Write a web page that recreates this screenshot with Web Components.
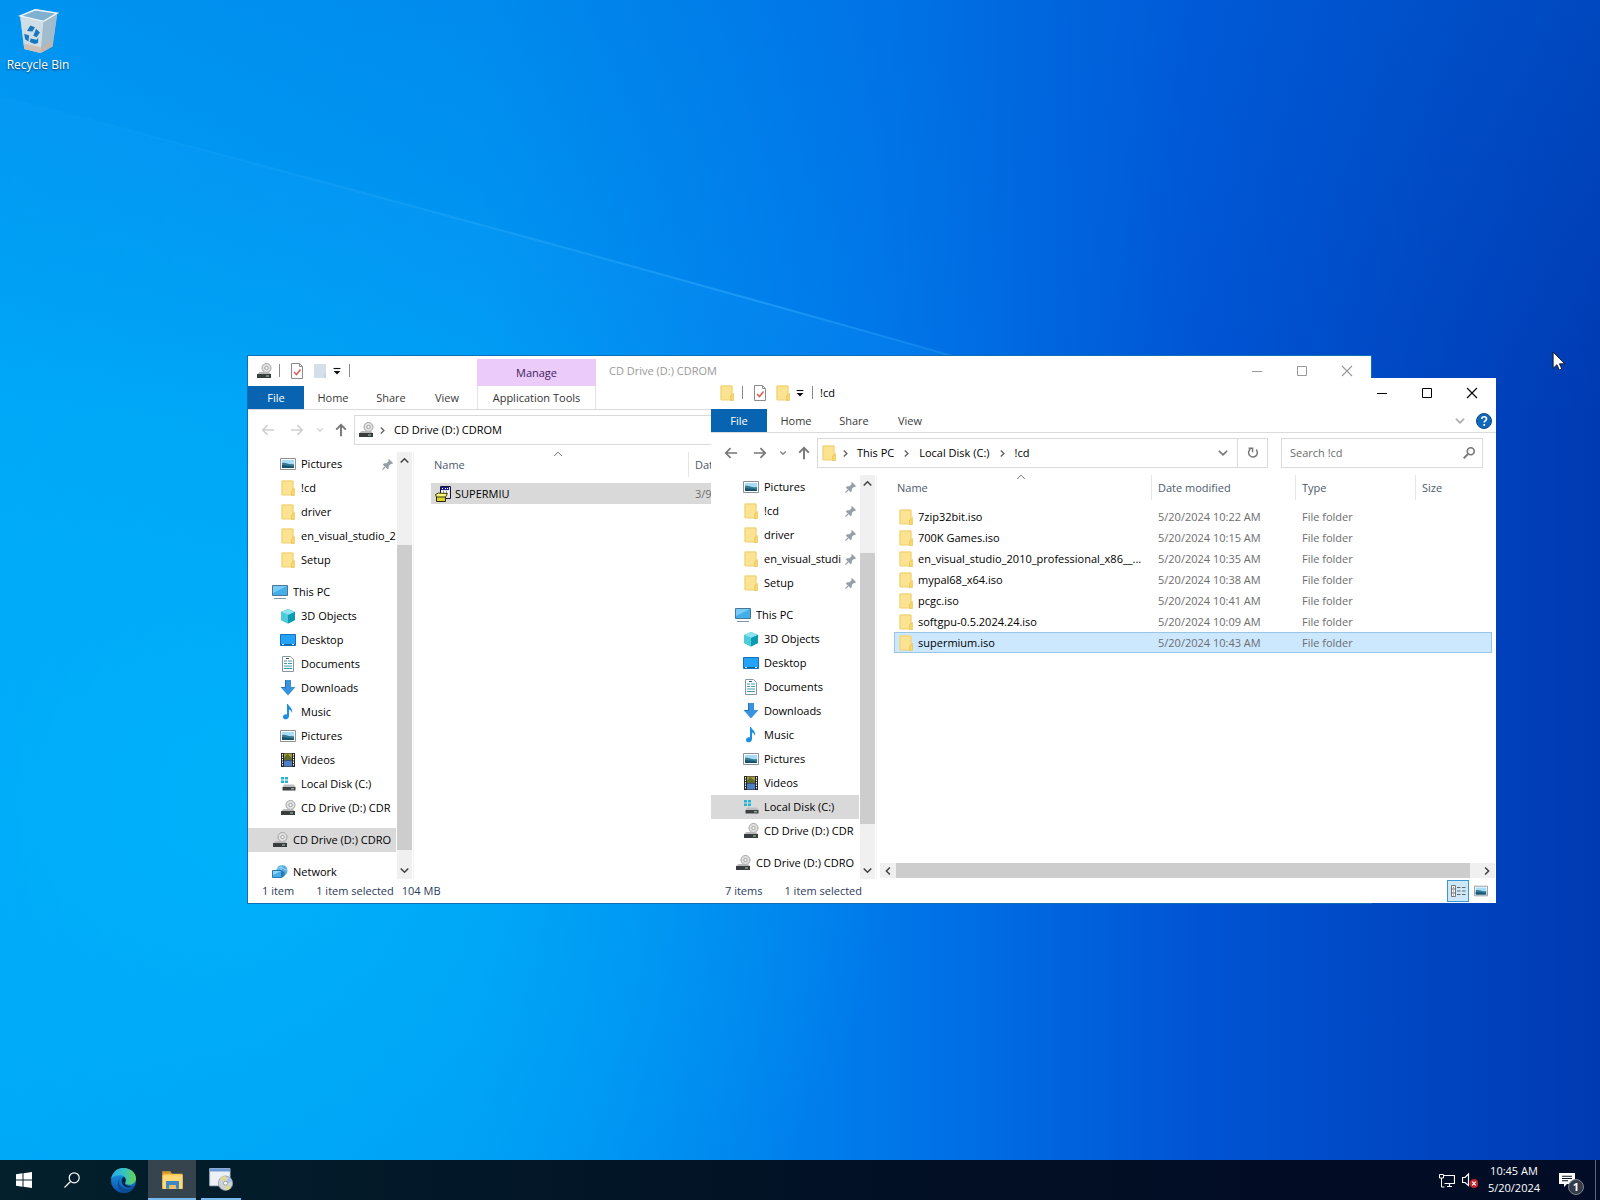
<!DOCTYPE html>
<html lang="en">
<head>
<meta charset="utf-8">
<title>Desktop</title>
<style>
html,body{margin:0;height:100%;overflow:hidden}
body{font:11px/16px "Open Sans","Noto Sans",sans-serif;color:#000}
</style>
</head>
<body>
<desk-top>
  <desk-icon slot="icons" label="Recycle Bin"></desk-icon>

  <explorer-window slot="windows" class="back" inactive heading="CD Drive (D:) CDROM" icon="cd" second="blank" context="Manage" context-tab="Application Tools" path="CD Drive (D:) CDROM" search="Search CD Drive (D:) CDROM" style="--before:76;--thumb:305;--after:12">
    <nav-item slot="nav" icon="pictures" pinned>Pictures</nav-item>
    <nav-item slot="nav" icon="folder">!cd</nav-item>
    <nav-item slot="nav" icon="folder">driver</nav-item>
    <nav-item slot="nav" icon="folder">en_visual_studio_2</nav-item>
    <nav-item slot="nav" icon="folder">Setup</nav-item>
    <nav-item slot="nav" icon="pc" root>This PC</nav-item>
    <nav-item slot="nav" icon="cube">3D Objects</nav-item>
    <nav-item slot="nav" icon="desktop">Desktop</nav-item>
    <nav-item slot="nav" icon="documents">Documents</nav-item>
    <nav-item slot="nav" icon="downloads">Downloads</nav-item>
    <nav-item slot="nav" icon="music">Music</nav-item>
    <nav-item slot="nav" icon="pictures">Pictures</nav-item>
    <nav-item slot="nav" icon="videos">Videos</nav-item>
    <nav-item slot="nav" icon="disk">Local Disk (C:)</nav-item>
    <nav-item slot="nav" icon="cd">CD Drive (D:) CDR</nav-item>
    <nav-item slot="nav" icon="cd" root selected>CD Drive (D:) CDRO</nav-item>
    <nav-item slot="nav" icon="network" root>Network</nav-item>
    <file-table slot="files" columns="Name|Date modified" rows="installer,SUPERMIU,3/9/2024" selected="0" inactive></file-table>
    <span slot="status">1 item</span>
    <span slot="status">1 item selected</span>
    <span slot="extra">104 MB</span>
  </explorer-window>

  <explorer-window slot="windows" class="front" heading="!cd" icon="folder" second="folder" path="This PC|Local Disk (C:)|!cd" search="Search !cd" hscroll style="--before:61;--thumb:271;--after:38">
    <nav-item slot="nav" icon="pictures" pinned>Pictures</nav-item>
    <nav-item slot="nav" icon="folder" pinned>!cd</nav-item>
    <nav-item slot="nav" icon="folder" pinned>driver</nav-item>
    <nav-item slot="nav" icon="folder" pinned>en_visual_studi</nav-item>
    <nav-item slot="nav" icon="folder" pinned>Setup</nav-item>
    <nav-item slot="nav" icon="pc" root>This PC</nav-item>
    <nav-item slot="nav" icon="cube">3D Objects</nav-item>
    <nav-item slot="nav" icon="desktop">Desktop</nav-item>
    <nav-item slot="nav" icon="documents">Documents</nav-item>
    <nav-item slot="nav" icon="downloads">Downloads</nav-item>
    <nav-item slot="nav" icon="music">Music</nav-item>
    <nav-item slot="nav" icon="pictures">Pictures</nav-item>
    <nav-item slot="nav" icon="videos">Videos</nav-item>
    <nav-item slot="nav" icon="disk" selected>Local Disk (C:)</nav-item>
    <nav-item slot="nav" icon="cd">CD Drive (D:) CDR</nav-item>
    <nav-item slot="nav" icon="cd" root>CD Drive (D:) CDRO</nav-item>
    <file-table slot="files" columns="Name|Date modified|Type|Size" selected="6"
      rows="folder,7zip32bit.iso,5/20/2024 10:22 AM,File folder|folder,700K Games.iso,5/20/2024 10:15 AM,File folder|folder,en_visual_studio_2010_professional_x86__...,5/20/2024 10:35 AM,File folder|folder,mypal68_x64.iso,5/20/2024 10:38 AM,File folder|folder,pcgc.iso,5/20/2024 10:41 AM,File folder|folder,softgpu-0.5.2024.24.iso,5/20/2024 10:09 AM,File folder|folder,supermium.iso,5/20/2024 10:43 AM,File folder"></file-table>
    <span slot="status">7 items</span>
    <span slot="status">1 item selected</span>
  </explorer-window>

  <task-bar slot="taskbar"></task-bar>
</desk-top>

<script>
const ICONS = {
folder:'<path d="M1.500 .5h12v14.500h-12z" fill="#fbe391"/><path d="M2 1h11v14H2z" fill="none" stroke="#efd070"/><path d="M11.500 15.500V11l3-2.500v7z" fill="#f8d766" stroke="#e5bf52" stroke-width=".6"/>',
blank:'<path d="M2 1h12v14H2z" fill="#d5dfea"/><path d="M12 15v-4l2-2v6z" fill="#c8d4e1"/>',
check:'<path d="M2.500 .5h8l3 3v12h-11z" fill="#fff" stroke="#8c8c8c"/><path d="M10.500.5v3h3" fill="none" stroke="#8c8c8c"/><path d="M5 9l2.500 2.500 4-5" fill="none" stroke="#e0605a" stroke-width="1.600"/>',
cd:'<circle cx="10.500" cy="5" r="4.500" fill="#e4e4e4" stroke="#a2a2a2"/><circle cx="10.500" cy="5" r="1.700" fill="#fff" stroke="#9a9a9a"/><path d="M3.500 9h9.500l2 2.500H1z" fill="#b9b9b9"/><path d="M1 11h14v4H1z" fill="#3a3d40"/><path d="M10 13h3" stroke="#a9d5a0"/>',
disk:'<path d="M1 1h3v2.500H1zM5 1h3v2.500H5zM1 4.500h3V7H1zM5 4.500h3V7H5z" fill="#23b4d8"/><path d="M4 8.500h10l1.500 2.500H2.500z" fill="#bcbfc2"/><path d="M2.500 11h13v3.500h-13z" fill="#3c4043"/><path d="M11 12.800h3" stroke="#b5dcb0"/>',
pictures:'<path d="M.5 2.500h15v11H.5z" fill="#fff" stroke="#8b9299"/><path d="M2 4h12v8H2z" fill="#a7dcf7"/><path d="M2 7c4-1 6 2 12 1v4H2z" fill="#347b92"/><path d="M2 9c5 1 8 0 12 2v1H2z" fill="#1a5270"/>',
pc:'<path d="M.5 1.500h15v10H.5z" fill="#44aeea" stroke="#4a7894"/><path d="M1 2h14L1 9z" fill="#76ccf5"/><path d="M2 14.500h12" stroke="#7d98a8"/>',
cube:'<path d="M1 4l7-3 7 3v8l-7 3.500L1 12z" fill="#13b4c8"/><path d="M1 4l7-3 7 3-7 3z" fill="#8ee3ee"/><path d="M1 4l7 3v8.500L1 12z" fill="#4ecbd9"/><path d="M8 7l7-3v8l-7 3.500z" fill="#0b9cb4"/>',
desktop:'<path d="M.5 2.500h15v11H.5z" fill="#22a2f8" stroke="#1272bd"/><path d="M1 12.500h14" stroke="#0d62aa"/><path d="M2 12.500h2m8 0h2" stroke="#d4ecff"/>',
documents:'<path d="M2.500.5h8l3 3v12h-11z" fill="#fff" stroke="#8797a0"/><path d="M4 5h3M8 5h4M4 7.500h3M8 7.500h4M4 10h8M4 12.500h8" stroke="#409bb3"/><path d="M6 2.500h3" stroke="#345968"/>',
downloads:'<path d="M5 0h6v7h4.500L8 15.500.5 7H5z" fill="#3793dd"/><path d="M5.500 0v7.500H1.500" fill="none" stroke="#236fb8"/>',
music:'<path d="M8 0c1 3 5 4 4 9-.5-2-1.500-3-3-3.500V12c0 4-6 4.500-6 1 0-2 2-3 4-2.500V0z" fill="#1d8fe0"/>',
videos:'<path d="M1 1h14v14H1z" fill="#252629"/><path d="M4 1.500h8v6H4z" fill="#a89a3b"/><path d="M4 8.500h8v6H4z" fill="#4c7ec5"/><path d="M4 6l3-4 5 4v1.500H4z" fill="#5a6d2b"/><path d="M2.500 2v12M13.500 2v12" stroke="#fff" stroke-dasharray="1.500 1"/>',
network:'<circle cx="10" cy="6.500" r="5.500" fill="#55ade1"/><path d="M5 5c5-4 7 1 10 1M10 1c-3 4 1 7 1 11" fill="none" stroke="#a3ddf6"/><path d="M.5 6.500h9v7h-9z" fill="#48ace9" stroke="#2a79b1"/><path d="M1 7h8l-8 4z" fill="#8ed5fb"/><path d="M9.500 14l3-2V8l-3-1.500z" fill="#2d7cae"/>',
installer:'<path d="M5.500.5h10v12h-10z" fill="#e4e4ea" stroke="#171738"/><path d="M6 1h8v3H6z" fill="#1c208b"/><path d="M6 5h8v4H6z" fill="#fff"/><path d="M7 2.500h1m2 0h1m1 0h1" stroke="#fff"/><path d="M8 6h1m2 0h1" stroke="#222"/><path d="M1.500 10.500h9v5h-9z" fill="#d9d232" stroke="#292900"/><path d="M.5 8.500l3-1.500 9 .5-2 3.500h-9z" fill="#f8f37e" stroke="#3b3700"/>',
pin:'<path d="M9 1l6 6-2 1-1-.5-3 3v3L7.500 15 1 8.500 3 7h3l3-3-.5-1z" fill="#979ea7"/><path d="M4 12l-3.500 3.500" stroke="#979ea7" stroke-width="1.500"/>',
back:'<path d="M15 8H2M7.500 2.500L2 8l5.500 5.500" fill="none" stroke="currentColor" stroke-width="1.900"/>',
forward:'<path d="M1 8h13M8.500 2.500L14 8l-5.500 5.500" fill="none" stroke="currentColor" stroke-width="1.900"/>',
up:'<path d="M8 15V2M2.500 7.500L8 2l5.500 5.500" fill="none" stroke="currentColor" stroke-width="2.200"/>',
down:'<path d="M2.500 5L8 10.500 13.500 5" fill="none" stroke="currentColor" stroke-width="2.300"/>',
upper:'<path d="M2.500 11L8 5.500 13.500 11" fill="none" stroke="currentColor" stroke-width="2.300"/>',
left:'<path d="M11 2.500L5.500 8 11 13.500" fill="none" stroke="currentColor" stroke-width="2.500"/>',
right:'<path d="M5 2.500L10.500 8 5 13.500" fill="none" stroke="currentColor" stroke-width="2.500"/>',
caret:'<path d="M2 11L8 5l6 6" fill="none" stroke="currentColor" stroke-width="1.500"/>',
drop:'<path d="M2.500 4h11" stroke="#111" stroke-width="1.800"/><path d="M2.500 8h11L8 13.500z" fill="#111"/>',
refresh:'<path d="M11.500 4A5 5 0 1 1 5 3.500M3 2.500h4.500V7" fill="none" stroke="currentColor" stroke-width="1.700"/>',
find:'<circle cx="10" cy="6" r="4" fill="none" stroke="currentColor" stroke-width="1.900"/><path d="M7 9l-5 5" stroke="currentColor" stroke-width="2.200"/>',
min:'<path d="M3 8.500h10" stroke="currentColor"/>',
max:'<path d="M3.500 3.500h9v9h-9z" fill="none" stroke="currentColor"/>',
close:'<path d="M3 3l10 10M13 3L3 13" stroke="currentColor" stroke-width="1.100"/>',
help:'<circle cx="8" cy="8" r="7.500" fill="#1168b8" stroke="#0a4d8c"/><path d="M5.800 6c0-3 4.700-3 4.700 0 0 1.600-2.300 1.700-2.300 3.600M8.200 11v1.700" fill="none" stroke="#fff" stroke-width="1.700"/>',
details:'<path d="M1.500 2.500h4v11h-4z" fill="#fff" stroke="#777"/><path d="M1.500 6h4M1.500 10h4M3 4.300h1M3 8h1M3 12h1M7 4.500h3.500M12 4.500h3.500M7 8h3.500M12 8h3.500M7 11.500h3.500M12 11.500h3.500" stroke="#666"/>',
windows:'<path d="M0 2.200l6.500-.9v6.200H0zM7.500 1.200L16 0v7.500H7.500zM0 8.500h6.500v6.200L0 13.800zM7.500 8.500H16V16l-8.500-1.200z" fill="#fff"/>',
search:'<circle cx="10.200" cy="5.800" r="5" fill="none" stroke="#fff" stroke-width="1.200"/><path d="M6.500 9.500L.5 15.500" stroke="#fff" stroke-width="1.300"/>',
edge:'<defs><linearGradient id="g" x1="0" x2="1"><stop stop-color="#24a8e8"/><stop offset=".5" stop-color="#35c2c6"/><stop offset="1" stop-color="#66d34f"/></linearGradient><linearGradient id="b" x1="0" y1="0" x2="0" y2="1"><stop stop-color="#1ba1e6"/><stop offset="1" stop-color="#0b50ad"/></linearGradient></defs><circle cx="8" cy="8" r="8" fill="url(#b)"/><path d="M.1 7C1 2.500 4 0 8 0c5 0 8 3.500 8 6.500 0 2.700-2 4.200-4.500 4.200-1.800 0-2.800-.6-2.400-1.400.8-1.300 1-4-2.600-4.600C3.500 4.200 1 5.500.1 7z" fill="url(#g)"/><path d="M6.500 6c-2.500 2-1.500 7 3.500 7.500 2 .2 4-.8 4.800-1.400-1 2.200-3 3.600-6 3.900C4.500 15.500 2.500 9 6.500 6z" fill="#0d4c94"/><path d="M9.100 9.300c.6-1 .5-2.500-.6-3.500C6.500 6 6 9.500 8.500 11.500c2.500 1.500 5 1 7 .2-1 .3-3 .5-4.500-.2-1.300-.5-2.400-1-1.900-2.200z" fill="#052744"/>',
explorer:'<path d="M1 2.500h5.500l1 1.500H15v10.500H1z" fill="#f7c548"/><path d="M1 2.500h5.500l1 1.500H1z" fill="#d6942b"/><path d="M1 5h14v9.500H1z" fill="#fed978"/><path d="M3.500 14.500V9h9v5.500h-2.300V11.800H5.800v2.700z" fill="#3f86c4"/><path d="M5.800 11.800h4.400v2.700H5.800z" fill="#e9c063"/>',
setup:'<path d="M.5 1h13.500v11.500H.5z" fill="#edf1f6" stroke="#b9c6d8" stroke-width=".6"/><path d="M.5 1h13.500v2H.5z" fill="#6f9bd6"/><circle cx="11" cy="10.800" r="4.800" fill="#cbd2d8" stroke="#8c97a0" stroke-width=".5"/><path d="M11 10.800L7.500 7.500A5 5 0 0 1 11 6zM11 10.800l3.500 3.200A4.800 4.800 0 0 1 11 15.500z" fill="#e2d98c"/><path d="M11 10.800l2.500-4a5 5 0 0 1 2 3z" fill="#a8bedc"/><circle cx="11" cy="10.800" r="1.300" fill="#fff" stroke="#7d858b" stroke-width=".5"/>',
lan:'<path d="M4.500 3.500h11v8H5.500M8 14.500h5M10.500 11.500v3" fill="none" stroke="#fff" stroke-width="1.200"/><path d="M.5 2.500h4v3.500h-4zM2.500 6v9h3" fill="none" stroke="#fff"/>',
mute:'<path d="M.5 5.500H3L6.500 2v11.500L3 10.500H.5z" fill="none" stroke="#fff" stroke-width="1.200"/><circle cx="12" cy="11.500" r="4.500" fill="#c4242b"/><path d="M10.200 9.700l3.600 3.600m0-3.600l-3.600 3.600" stroke="#fff" stroke-width="1.200"/>',
notes:'<path d="M0 1h16v11H8l-3 3v-3H0z" fill="#fff"/><path d="M3 4.300h10M3 6.500h10M3 8.800h6" stroke="#0a1328" stroke-width="1.100"/>',
bin:'<path d="M1.500 2.500L7 0l8 1.500-1.700 12L9 16l-6-1.500z" fill="#b4cad9" opacity=".92"/><path d="M1.500 2.500L10 4.500 9 16l-6-1.500z" fill="#cfdde6"/><path d="M10 4.500l5-3-1.700 12L9 16z" fill="#a3bccd"/><path d="M2.800 12.500l6.400 1.500 4.300-2.800-.3 2.500L9 16l-6-1.500z" fill="#cdb3a3" opacity=".7"/><path d="M1.500 2.500L7 .3l8 1.200-5 3z" fill="#7fb0d0" stroke="#edf5f9" stroke-width=".5"/><path d="M4 8l1.200-2 1.700.6L6 8.200zM7.300 7.200l1.400 1.300-1.200 1.800L6.300 9.700zM3 9l1.800.6-.3 2.200-1.200-.8zM5 12l.3-1.300 2.300.5.500-.9-.1 2.100-1.200.3z" fill="#1877be"/>',
cursor:'<path d="M1 0v14.500l3.400-3.200L6.500 16l2.200-1-2.100-4.500h4.700z" fill="#fff" stroke="#111" stroke-width=".8"/>'
};
const define = (tag, render) => customElements.define(tag, class extends HTMLElement {
  connectedCallback() {
    if (!this.shadowRoot) this.attachShadow({mode: 'open'}).innerHTML = render(this);
  }
});
const icon = (name, cls = '') => `<ui-icon name="${name}" class="${cls}"></ui-icon>`;
const reset = `*{box-sizing:border-box}button{font:inherit;color:inherit;background:none;border:0;padding:0;margin:0;display:flex;align-items:center;justify-content:center}a{color:inherit;text-decoration:none}`;

define('ui-icon', el => `<style>:host{display:block;flex:none;width:var(--size,16px);height:var(--size,16px)}svg{display:block;width:100%;height:100%}</style><svg viewBox="0 0 16 16" aria-hidden="true">${ICONS[el.getAttribute('name')]}</svg>`);

define('desk-icon', el => `<style>${reset}
:host{display:block;width:76px}
a{display:flex;flex-direction:column;align-items:center;gap:4px;color:#fff;font-size:12px;text-shadow:0 1px 2px #000a}
ui-icon{--size:44px}</style><a href="#">${icon('bin')}<span>${el.getAttribute('label')}</span></a>`);

define('nav-item', el => `<style>${reset}
:host{display:block}
:host([root]){margin-top:8px}
a{display:flex;align-items:center;gap:5px;height:24px;padding-left:32px}
:host([root]) a{padding-left:24px}
:host([selected]) a{background:#d9d9d9}
span{flex:1;min-width:0;overflow:hidden;white-space:nowrap}
.pin{--size:12px;margin:0 2px 0 -4px}</style><a href="#">${icon(el.getAttribute('icon'))}<span><slot></slot></span>${el.hasAttribute('pinned') ? icon('pin', 'pin') : ''}</a>`);

define('file-table', el => {
  const cols = el.getAttribute('columns').split('|');
  const widths = [258, 144, 120, 76];
  const chosen = Number(el.getAttribute('selected'));
  const rows = el.getAttribute('rows').split('|').map(r => r.split(','));
  return `<style>${reset}
:host{display:block;overflow:hidden}
table{table-layout:fixed;border-collapse:separate;border-spacing:0;width:598px}
th{height:31px;padding:0 0 5px 3px;text-align:left;font-weight:400;color:#4c5a6d;background:linear-gradient(#e5e5e5,#e5e5e5) right top/1px 25px no-repeat;position:relative}
th+th{padding-left:6px}
th:last-child{background:none}
th ui-icon{position:absolute;top:-3px;left:calc(50% - 7px);--size:10px;color:#666}
td{height:21px;padding:0 0 0 6px;color:#6d6d6d;white-space:nowrap;line-height:16px}
td:first-child{color:#000;padding-left:4px}
td>div{display:flex;gap:4px;align-items:center}
tr.on td{background:#cce8ff;border:solid #99c5e8;border-width:1px 0}
tr.on td:first-child{border-left-width:1px;padding-left:3px}
tr.on td:last-child{border-right-width:1px}
:host([inactive]) tr.on td{background:#d9d9d9;border-color:#d9d9d9}
</style><table><colgroup>${widths.map(w => `<col style="width:${w}px">`).join('')}</colgroup>
<thead><tr>${widths.map((_, i) => `<th>${cols[i] || ''}${i ? '' : icon('caret')}</th>`).join('')}</tr></thead>
<tbody>${rows.map((r, n) => `<tr class="${n === chosen ? 'on' : ''}"><td><div>${icon(r[0])}<span>${r[1]}</span></div></td><td>${r[2] || ''}</td><td>${r[3] || ''}</td><td></td></tr>`).join('')}</tbody></table>`;
});

define('scroll-bar', el => {
  const h = el.hasAttribute('horizontal');
  return `<style>${reset}
:host{display:flex;flex-direction:column;width:15px;background:#f0f0f0}
:host([horizontal]){flex-direction:row;width:auto;height:15px}
button{flex:none;width:15px;height:17px;color:#444;--size:11px}
:host([horizontal]) button{width:16px;height:15px;--size:10px}
.a{flex:var(--before) 0 0}.t{flex:var(--thumb) 0 0;background:#cdcdcd}.z{flex:var(--after) 0 0}
</style><button aria-label="Scroll ${h ? 'left' : 'up'}">${icon(h ? 'left' : 'upper')}</button><div class="a"></div><div class="t"></div><div class="z"></div><button aria-label="Scroll ${h ? 'right' : 'down'}">${icon(h ? 'right' : 'down')}</button>`;
});

define('explorer-window', el => {
  const g = n => el.getAttribute(n);
  const ctx = g('context');
  return `<style>${reset}
:host{display:flex;flex-direction:column;background:#fff;overflow:hidden}
.title{display:flex;height:31px;flex:none}
:host([context]) .title{height:30px}
.quick{display:flex;align-items:center;padding:0 7px 0 8px;height:29px}
.quick i{width:1px;height:13px;background:#8a8a8a;margin:0 9px 0 7px}
.quick i.end{margin:0 0 0 7px}
.quick button{width:16px;height:20px}
.quick .second{margin:0 4px 0 7px}
.quick .drop{width:10px;--size:10px}
.lead{flex:none}
:host([context]) .lead{width:229px}
.context{width:119px;margin-top:3px;background:#ebcbfa;color:#42235a;text-align:center;line-height:27px}
h1{font:inherit;margin:0;line-height:30px;flex:1;white-space:nowrap}
:host([context]) h1{padding-left:13px}
:host([inactive]) h1,:host([inactive]) .controls{color:#999}
.controls{display:flex;height:30px;padding-right:2px}
.controls button{width:45px}
.tabs{display:flex;height:23px;flex:none;color:#3b3b3b}
.tabs button{width:58px}
.tabs .file{width:56px;background:#0863b1;color:#fff}
.tabs .view{width:54px}
.tabs .tool{width:119px;margin-left:3px;border:solid #e6e0ea;border-width:0 1px;color:#333}
.tabs .gap{flex:1}
.tabs .fold{width:24px;color:#a8a8a8;--size:12px}
.tabs .help{width:24px}
.bar{display:flex;flex:none;border-top:1px solid #dadbdc;padding:5px 13px 4px 12px;color:#777}
.arrows{display:flex;align-items:center;--size:14px;height:30px}
.arrows button{width:16px;height:30px}
:host([inactive]) .hot{color:#d0d0d0}
.arrows .fwd{margin-left:13px}.arrows .hist{width:12px;--size:8px;margin:0 7px 0 9px}
.address{display:flex;align-items:center;flex:1;height:30px;border:1px solid #d9d9d9;margin-left:5px;color:#000;white-space:nowrap}
.address .loc{margin:0 0 0 3px}
.address ui-icon.chev{--size:9px;color:#666;margin:0 7px 0 4px}
.address a+ui-icon.chev{margin:0 8px}
.address .gap{flex:1}
.address button{width:29px;height:28px;color:#777;--size:12px}
.address .ref{border-left:1px solid #d9d9d9;--size:14px;width:30px}
.search{display:flex;align-items:center;width:202px;height:30px;border:1px solid #d9d9d9;margin-left:13px;padding:0 6px 0 8px;--size:14px}
.search input{flex:1;min-width:0;border:0;padding:0;outline:0;font:inherit;background:none}
.search input::placeholder{color:#6e6e6e;opacity:1}
.body{display:flex;flex:1;min-height:0;padding-top:3px}
nav{width:148px;overflow:hidden;flex:none}
scroll-bar{flex:none;margin-left:1px}
.list{flex:1;min-width:0;display:flex;flex-direction:column;margin-left:1px;border-left:1px solid #f3f3f3}
.files{flex:1;overflow:hidden;padding-left:17px}
.list scroll-bar{margin:0 1px 1px 3px;--before:0;--thumb:571;--after:9}
.status{display:flex;align-items:center;height:24px;flex:none;padding:0 7px 0 14px;color:#2a3c5c}
.items{display:flex;gap:22px}
.extra{padding-left:8px}
.views{margin-left:auto;display:flex;gap:4px}
.views button{height:22px;width:16px;--size:14px}
.views .on{width:22px;background:#cce8f9;border:1px solid #3c96d4;--size:16px}
</style>
<header class="title"><div class="lead"><div class="quick">${icon(g('icon'))}<i></i><button aria-label="Properties">${icon('check')}</button><button class="second" aria-label="New folder">${icon(g('second'))}</button><button class="drop" aria-label="Customize toolbar">${icon('drop')}</button><i class="end"></i></div></div>
${ctx ? `<div class="context">${ctx}</div>` : ''}<h1>${g('heading')}</h1>
<div class="controls"><button aria-label="Minimize">${icon('min')}</button><button aria-label="Maximize">${icon('max')}</button><button aria-label="Close">${icon('close')}</button></div></header>
<div class="tabs"><button class="file">File</button><button>Home</button><button>Share</button><button class="view">View</button>${ctx ? `<button class="tool">${g('context-tab')}</button>` : ''}<div class="gap"></div><button class="fold" aria-label="Expand ribbon">${icon('down')}</button><button class="help" aria-label="Help">${icon('help')}</button></div>
<div class="bar"><div class="arrows"><button class="hot" aria-label="Back">${icon('back')}</button><button class="fwd hot" aria-label="Forward">${icon('forward')}</button><button class="hist hot" aria-label="Recent">${icon('down')}</button><button aria-label="Up">${icon('up')}</button></div>
<div class="address">${icon(g('icon'), 'loc')}${g('path').split('|').map(p => icon('right', 'chev') + `<a href="#">${p}</a>`).join('')}<div class="gap"></div><button aria-label="Previous locations">${icon('down')}</button><button class="ref" aria-label="Refresh">${icon('refresh')}</button></div>
<div class="search"><input type="text" aria-label="${g('search')}" placeholder="${g('search')}">${icon('find')}</div></div>
<div class="body"><nav><slot name="nav"></slot></nav><scroll-bar></scroll-bar><section class="list"><div class="files"><slot name="files"></slot></div>${el.hasAttribute('hscroll') ? '<scroll-bar horizontal></scroll-bar>' : ''}</section></div>
<footer class="status"><div class="items"><slot name="status"></slot></div><div class="extra"><slot name="extra"></slot></div><div class="views"><button class="on" aria-label="Details view">${icon('details')}</button><button aria-label="Large icons view">${icon('pictures')}</button></div></footer>`;
});

define('task-bar', () => `<style>${reset}
:host{display:flex;height:40px;color:#fff;background:linear-gradient(90deg,#03202c,#020f24 60%,#020c26)}
.apps{display:flex;flex:1}
button{width:48px;height:40px}
.edge{margin:0 1px 0 3px;--size:25px}
.explorer{background:#35444d;border-bottom:2px solid #76b9ed;--size:23px}
.setup{width:40px;margin-left:5px;border-bottom:2px solid #76b9ed;--size:24px}
.tray{display:flex;align-items:center}
.tray .sm{width:23px}
.clock{width:66px;display:block;line-height:17px;text-align:center;padding-bottom:2px}
.notes{position:relative;width:40px;margin-right:8px}
.notes b{position:absolute;left:21px;top:19px;width:16px;height:16px;border-radius:8px;background:#333c48;border:1px solid #7b828b;font:700 11px/14px "Open Sans",sans-serif}
.show{width:5px;border-left:1px solid #5d6676}
</style><div class="apps"><button aria-label="Start">${icon('windows')}</button><button aria-label="Search">${icon('search')}</button><button class="edge" aria-label="Edge">${icon('edge')}</button><button class="explorer" aria-label="File Explorer">${icon('explorer')}</button><button class="setup" aria-label="Setup">${icon('setup')}</button></div>
<div class="tray"><button class="sm" aria-label="Network">${icon('lan')}</button><button class="sm" aria-label="Volume">${icon('mute')}</button><button class="clock">10:45 AM<br>5/20/2024</button><button class="notes" aria-label="Notifications">${icon('notes')}<b>1</b></button><button class="show" aria-label="Show desktop"></button></div>`);

define('desk-top', () => `<style>
:host{display:flex;flex-direction:column;height:100vh;position:relative;overflow:hidden;background:#0078e0}
.wall{position:absolute;inset:0;width:100%;height:100%}
main{flex:1;position:relative}
.icons{padding:9px 0 0}
::slotted(explorer-window){position:absolute}
::slotted(.back){left:248px;top:356px;width:1123px;height:547px;box-shadow:0 0 0 1px #0f6fb5}
::slotted(.front){left:711px;top:378px;width:785px;height:525px}
.pointer{position:absolute;left:1552px;top:352px;--size:18px}
::slotted(task-bar){position:relative}
</style>
<svg class="wall" viewBox="0 0 1600 1200" preserveAspectRatio="none" aria-hidden="true"><defs>
<linearGradient id="base" x1="0" x2="1"><stop stop-color="#00a6f8"/><stop offset=".3" stop-color="#009af4"/><stop offset=".55" stop-color="#0078ea"/><stop offset=".75" stop-color="#0054d4"/><stop offset="1" stop-color="#003ab2"/></linearGradient>
<radialGradient id="glow" gradientUnits="userSpaceOnUse" cx="250" cy="800" r="650"><stop stop-color="#00b4fa" stop-opacity=".9"/><stop offset="1" stop-color="#00b0fa" stop-opacity="0"/></radialGradient>
<linearGradient id="top" x1="0" y1="0" x2="0" y2="1"><stop stop-color="#0068dc" stop-opacity=".3"/><stop offset=".35" stop-color="#0068dc" stop-opacity="0"/></linearGradient>
<linearGradient id="beam" gradientUnits="userSpaceOnUse" x1="480" y1="228" x2="440" y2="370"><stop stop-color="#1aa4ff" stop-opacity=".14"/><stop offset="1" stop-color="#1aa4ff" stop-opacity="0"/></linearGradient>
<linearGradient id="ray" x1="0" x2="1"><stop stop-color="#3ab4ff" stop-opacity="0"/><stop offset=".8" stop-color="#3ab4ff" stop-opacity=".45"/><stop offset="1" stop-color="#3ab4ff" stop-opacity=".2"/></linearGradient></defs>
<path fill="url(#base)" d="M0 0h1600v1200H0z"/><path fill="url(#glow)" d="M0 0h1600v1200H0z"/><path fill="url(#top)" d="M0 0h1600v1200H0z"/>
<path fill="url(#beam)" d="M0 96Q480 222 960 358H0z"/><path d="M0 96Q480 222 960 358" fill="none" stroke="url(#ray)" stroke-width="2"/></svg>
<main><div class="icons"><slot name="icons"></slot></div><slot name="windows"></slot></main><slot name="taskbar"></slot>${icon('cursor', 'pointer')}`);
</script>
</body>
</html>
